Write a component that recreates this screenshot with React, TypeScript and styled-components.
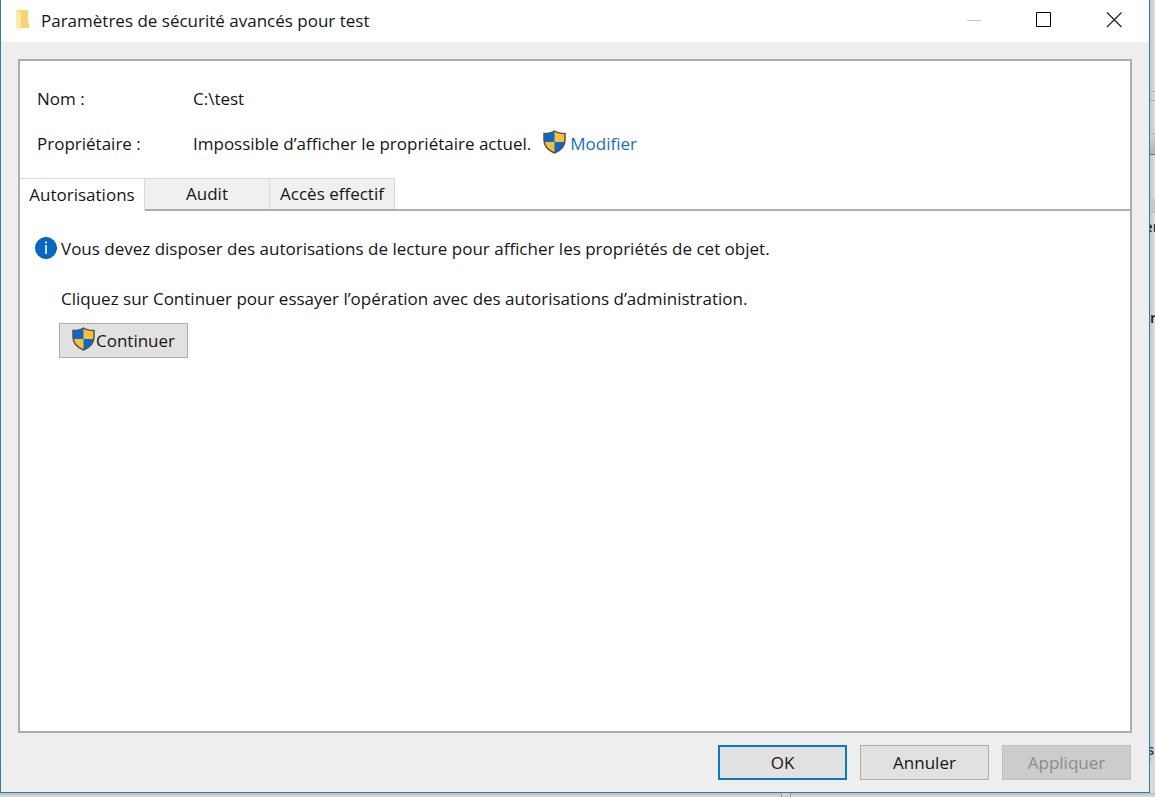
import React from 'react';
import styled, { createGlobalStyle } from 'styled-components';

const Global = createGlobalStyle`
  * { box-sizing: border-box; }
  body { margin: 0; font: 17px/24px "Open Sans", "Noto Sans", sans-serif; color: #151515; }
  button { font: inherit; color: inherit; }
`;

const Desktop = styled.div`
  display: grid;
  grid-template-columns: 1fr 5px;
  grid-template-rows: 1fr 4px;
  min-height: 100vh;
  background: #d8d9db;
`;
const Dialog = styled.main`
  display: flex;
  flex-direction: column;
  min-width: 0;
  border: solid #2b7fa8;
  border-width: 0 1px 1px 1px;
  background: #eee;
`;
const TitleBar = styled.header`
  display: flex;
  align-items: center;
  height: 42px;
  padding: 0 0 2px 13px;
  background: #fff;
`;
const Title = styled.h1`
  flex: 1;
  margin: 0 0 0 9px;
  padding-top: 2px;
  font-size: 17px;
  font-weight: 400;
`;
const Caption = styled.button`
  display: grid;
  place-items: center;
  width: 70px;
  height: 38px;
  padding: 0;
  border: 0;
  background: none;
`;
const Panel = styled.section`
  flex: 1;
  margin: 17px 17px 0;
  border: 2px solid #adadad;
  background: #fff;
`;
const Properties = styled.dl`
  display: grid;
  grid-template-columns: 156px 1fr;
  row-gap: 21px;
  margin: 0;
  padding: 26px 17px 22px;
`;
const Term = styled.dt``;
const Value = styled.dd`
  display: flex;
  align-items: center;
  gap: 12px;
  margin: 0;
`;
const Link = styled.a`
  display: flex;
  align-items: center;
  gap: 4px;
  color: #1a6fc0;
  text-decoration: none;
`;
const Tabs = styled.div`
  display: flex;
  height: 33px;
  border-bottom: 2px solid #adadad;
`;
const Tab = styled.button<{ $active?: boolean }>`
  width: 125px;
  height: ${p => (p.$active ? 33 : 31)}px;
  padding: 0;
  border: solid #d9d9d9;
  border-width: 1px 1px 0 0;
  background: ${p => (p.$active ? '#fff' : '#f0f0f0')};
  white-space: nowrap;
`;
const Content = styled.div`
  padding: 26px 15px;
`;
const Notice = styled.p`
  display: flex;
  gap: 4px;
  margin: 0;
`;
const Details = styled.div`
  padding: 26px 0 0 24px;
`;
const Hint = styled.p`
  margin: 0 0 12px;
  padding-left: 2px;
`;
const Button = styled.button<{ $primary?: boolean }>`
  display: flex;
  align-items: center;
  justify-content: center;
  gap: 1px;
  width: 129px;
  height: 35px;
  padding: 0;
  border: ${p => (p.$primary ? '2px solid #0a78c2' : '1px solid #adadad')};
  background: #e1e1e1;
  &:disabled { border-color: #bfbfbf; background: #ccc; color: #8c8c8c; }
`;
const Footer = styled.footer`
  display: flex;
  justify-content: flex-end;
  gap: 13px;
  padding: 12px 18px;
`;
const ShieldIcon = styled.svg`
  flex: none;
  width: 23px;
  height: 24px;
  margin-top: -4px;
`;

/* Slivers of the windows that lie behind the dialog. */
const SideEdge = styled.aside`
  display: flex;
  flex-direction: column;
  overflow: hidden;
`;
const Slice = styled.div<{ $height: number; $shade?: string; $line?: string }>`
  flex: none;
  height: ${p => p.$height}px;
  border-bottom: 1px solid ${p => p.$line ?? 'transparent'};
  background: ${p => p.$shade ?? 'linear-gradient(90deg, #c3c8cb, #dcddde)'};
`;
const Fragment = styled.span<{ $indent?: number; $tint?: string }>`
  flex: none;
  display: block;
  width: 5px;
  height: 26px;
  overflow: hidden;
  background: linear-gradient(90deg, #c3c8cb, #dcddde);
  color: ${p => p.$tint ?? '#1a1a2a'};
  font-size: 15px;
  font-weight: 600;
  line-height: 26px;
  text-indent: ${p => p.$indent ?? 0}px;
`;
const BottomEdge = styled.aside`
  grid-column: 1 / -1;
  display: flex;
  background: linear-gradient(#a9bfcd, #d3cbc4 50%, #ecd9c8);
`;
const Seam = styled.span`
  width: 10px;
  margin-left: 781px;
  border: solid #9a9fa3;
  border-width: 0 1px;
  background: #cdd1d4;
`;

const Shield = () => (
  <ShieldIcon viewBox="0 0 23 24" aria-hidden="true">
    <path d="M11.500 1C8.500 3 5 3.500 1 3.500V10c0 6 4.500 10.500 10.500 13C17.500 20.500 22 16 22 10V3.500C18 3.500 14.500 3 11.500 1z" fill="#fbbf35" />
    <path d="M11.500 1C8.500 3 5 3.500 1 3.500V12h10.500zM11.500 12H22c-.7 5-5 9-10.500 11z" fill="#0d68c8" />
    <path d="M11.500 1C8.500 3 5 3.500 1 3.500V10c0 6 4.500 10.500 10.500 13C17.500 20.500 22 16 22 10V3.500C18 3.500 14.500 3 11.500 1z" fill="none" stroke="#4b5358" strokeWidth="1.500" />
  </ShieldIcon>
);
const Info = () => (
  <svg width="22" height="22" viewBox="0 0 22 22" aria-hidden="true">
    <circle cx="11" cy="11" r="10.500" fill="#0768c4" stroke="#0a57a0" />
    <path d="M11 8V17" stroke="#fff" strokeWidth="1.600" />
    <circle cx="11" cy="5.500" r="1.100" fill="#fff" />
  </svg>
);
const Folder = () => (
  <svg width="18" height="20" viewBox="0 0 18 20" aria-hidden="true">
    <path d="M2 0h12v12l1 2v4H2z" fill="#f7d778" />
    <path d="M2 0l5 3v14l-1 3-4-2z" fill="#fde9a9" />
    <path d="M7 3l5-3h2v12l1 2v4H7z" fill="#f6d374" />
  </svg>
);

export default function App() {
  return (
    <>
      <Global />
      <Desktop>
        <Dialog>
          <TitleBar>
            <Folder />
            <Title>Paramètres de sécurité avancés pour test</Title>
            <Caption aria-label="Réduire" disabled>
              <svg width="16" height="16"><path d="M1 8.500h14" stroke="#c4c4c4" /></svg>
            </Caption>
            <Caption aria-label="Agrandir">
              <svg width="16" height="16"><path d="M.5 .5h14v14h-14z" fill="none" stroke="#000" /></svg>
            </Caption>
            <Caption aria-label="Fermer">
              <svg width="16" height="16"><path d="M1 .5l14.500 14.500M15.500 .5L1 15" stroke="#222" strokeWidth="1.200" /></svg>
            </Caption>
          </TitleBar>
          <Panel>
            <Properties>
              <Term>Nom :</Term>
              <Value>C:\test</Value>
              <Term>Propriétaire :</Term>
              <Value>
                Impossible d’afficher le propriétaire actuel.
                <Link href="#proprietaire"><Shield />Modifier</Link>
              </Value>
            </Properties>
            <Tabs role="tablist">
              <Tab role="tab" aria-selected="true" $active>Autorisations</Tab>
              <Tab role="tab" aria-selected="false">Audit</Tab>
              <Tab role="tab" aria-selected="false">Accès effectif</Tab>
            </Tabs>
            <Content role="tabpanel">
              <Notice><Info />Vous devez disposer des autorisations de lecture pour afficher les propriétés de cet objet.</Notice>
              <Details>
                <Hint>Cliquez sur Continuer pour essayer l’opération avec des autorisations d’administration.</Hint>
                <Button><Shield />Continuer</Button>
              </Details>
            </Content>
          </Panel>
          <Footer>
            <Button $primary>OK</Button>
            <Button>Annuler</Button>
            <Button disabled>Appliquer</Button>
          </Footer>
        </Dialog>
        <SideEdge aria-hidden="true">
          <Slice $height={92} $line="#b4b7ba" />
          <Slice $height={9} $line="#a9acaf" />
          <Slice $height={33} $line="#b4b7ba" />
          <Slice $height={21} $shade="linear-gradient(#d0d2d4, #b0b2b4)" $line="#6f7274" />
          <Slice $height={44} />
          <Slice $height={14} $shade="#c4c6c8" $line="#b4b7ba" />
          <Fragment $indent={-6}>er</Fragment>
          <Slice $height={65} />
          <Fragment>r</Fragment>
          <Slice $height={406} />
          <Fragment $indent={-3} $tint="#1d4a7a">s</Fragment>
        </SideEdge>
        <BottomEdge aria-hidden="true"><Seam /></BottomEdge>
      </Desktop>
    </>
  );
}
